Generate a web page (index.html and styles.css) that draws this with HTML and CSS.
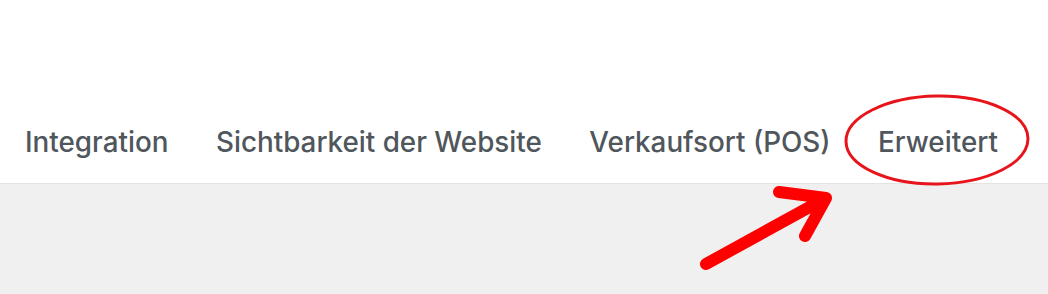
FILE: index.html
```html
<!DOCTYPE html>
<html>
<head>
    <meta charset="utf-8">
    <title>Einstellungen</title>
    <link rel="stylesheet" href="styles.css">
</head>
<body>
    <div class="page">
        <div class="topbar">
            <nav class="tabs">
                <a class="tab">Integration</a>
                <a class="tab">Sichtbarkeit der Website</a>
                <a class="tab">Verkaufsort (POS)</a>
                <a class="tab">Erweitert</a>
            </nav>
        </div>
        <div class="content"></div>

        <!-- Markierung -->
        <svg class="markup" width="1048" height="294" viewBox="0 0 1048 294">
            <ellipse cx="937" cy="140" rx="91" ry="44" fill="none" stroke="#e8141b" stroke-width="3" transform="rotate(-1 937 140)" />
            <path d="M706 264 L826 198 M779 192 L826 198 L805 236" fill="none" stroke="#ff0000" stroke-width="12" stroke-linecap="round" stroke-linejoin="round" />
        </svg>
    </div>
</body>
</html>
```

FILE: styles.css
```css
body
{
    margin: 0;
    font-family: Inter, "Liberation Sans", sans-serif;
}

.page
{
    position: relative;
    width: 1048px;
    height: 294px;
    overflow: hidden;
    background-color: #f0f0f0;
}

.topbar
{
    height: 183px;
    background-color: #ffffff;
    border-bottom: 1px solid #e4e4e4;
    display: flex;
    align-items: flex-end;
}

.tabs
{
    display: flex;
    gap: 47.5px;
    padding-left: 25px;
    padding-bottom: 24px;
}

.tab
{
    font-size: 27.8px;
    line-height: 34px;
    font-weight: 500;
    color: #4f565c;
    text-decoration: none;
}

.markup
{
    position: absolute;
    left: 0;
    top: 0;
}
```
